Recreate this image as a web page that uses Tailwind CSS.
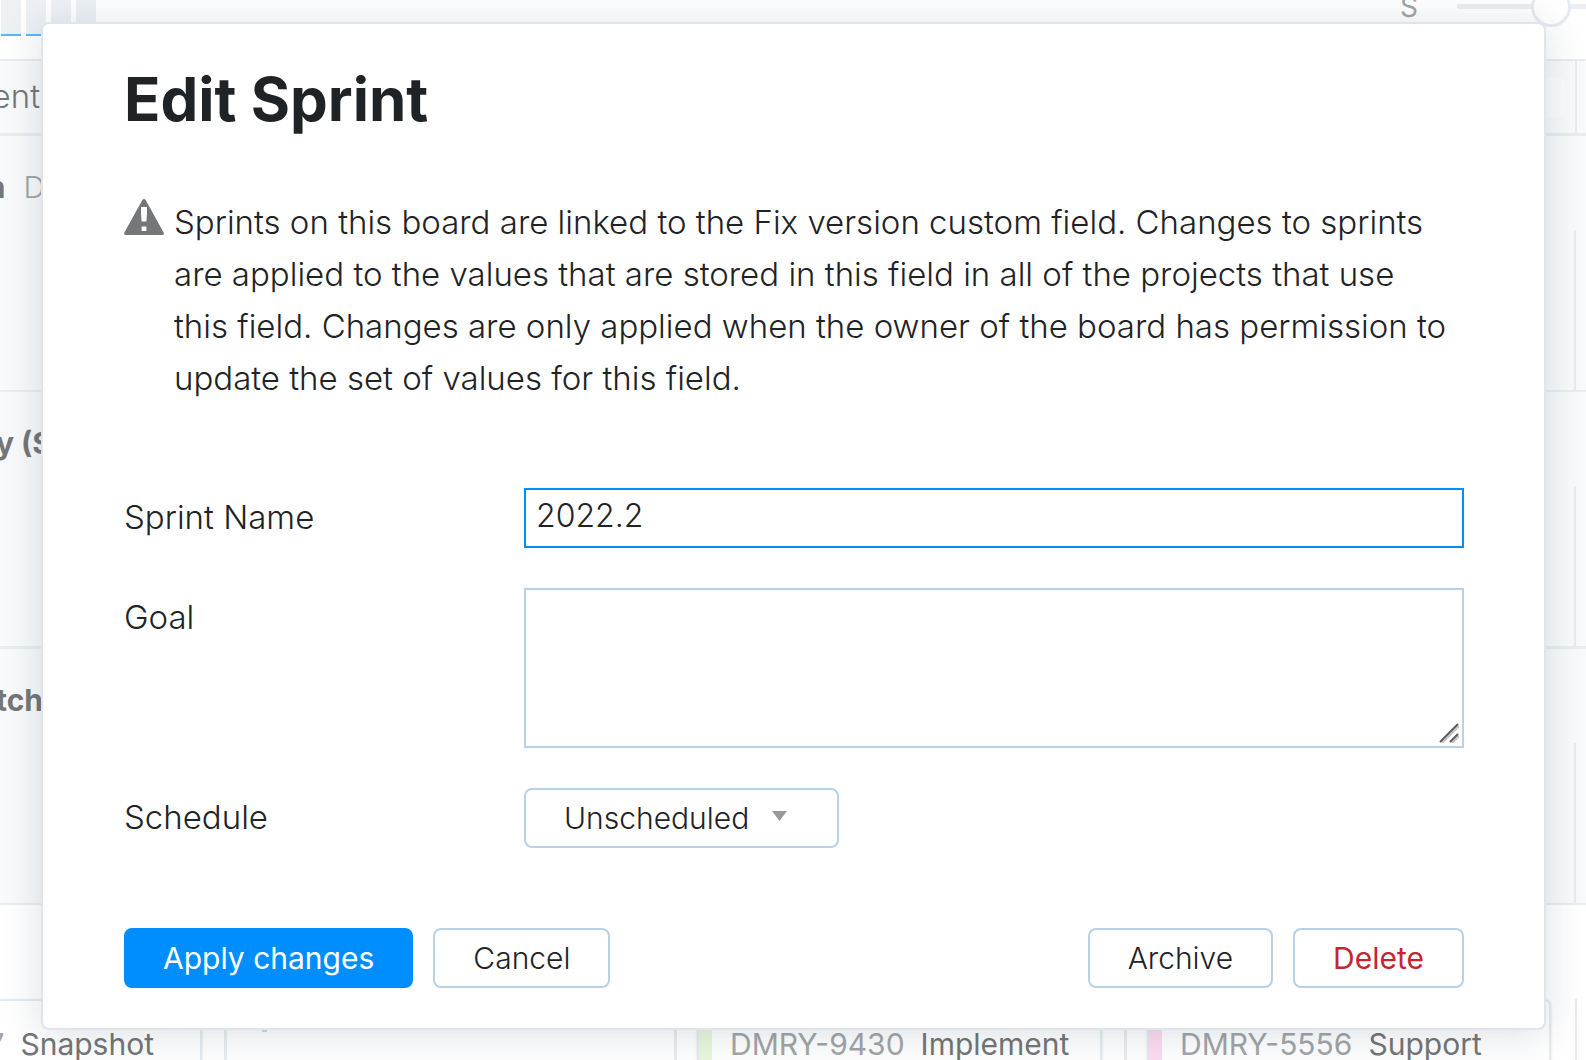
<!DOCTYPE html>
<html lang="en">
<head>
    <meta charset="UTF-8">
    <meta name="viewport" content="width=device-width, initial-scale=1.0">
    <title>Edit Sprint</title>
    <script src="https://cdn.jsdelivr.net/npm/@tailwindcss/browser@4"></script>
</head>
<body class="relative h-screen overflow-hidden bg-white font-['Inter',sans-serif] font-light text-[#1f2326]">

    <!-- Board behind the dialog -->
    <div class="flex h-full flex-col overflow-hidden text-[#757677]" aria-hidden="true">
        <div class="flex h-[61px] shrink-0 items-start justify-between border-b-2 border-[#e9edf1]">
            <div class="flex gap-[5px] pl-px">
                <div class="h-9 w-5 border-b-2 border-[#5eb5ff] bg-[#edf1f4]"></div>
                <div class="h-9 w-5 border-b-2 border-[#5eb5ff] bg-[#edf1f4]"></div>
                <div class="h-9 w-5 bg-[#edf1f4]"></div>
                <div class="h-9 w-5 bg-[#edf1f4]"></div>
            </div>
            <div class="-mr-[59px] flex h-[13px] items-center gap-[39px]">
                <label for="size" class="text-[28px] font-normal text-[#a3a5a7]">S</label>
                <input id="size" type="range" value="50" tabindex="-1" class="h-[5px] w-[188px] appearance-none bg-[#eaeef2] [&::-webkit-slider-thumb]:size-10 [&::-webkit-slider-thumb]:appearance-none [&::-webkit-slider-thumb]:rounded-full [&::-webkit-slider-thumb]:border-3 [&::-webkit-slider-thumb]:border-[#e7ebf0] [&::-webkit-slider-thumb]:bg-white">
            </div>
        </div>

        <div class="flex h-[75px] shrink-0 justify-between border-b-3 border-[#e9edf1] bg-[#f8fafb]">
            <div class="flex w-10 items-center justify-end text-[33px]">ent</div>
            <div class="mr-[9px] flex w-[60px] items-center border-r-2 border-[#e9ebf1]">
                <div class="h-10 w-12 rounded-lg bg-[#fcfcfd]"></div>
            </div>
        </div>

        <div class="flex h-64 shrink-0 items-end justify-between border-b-2 border-[#e9edf1] bg-[#f8fafb]">
            <div class="flex w-[45px] justify-end gap-[18px] self-start pt-[29px] text-[30px]"><b class="font-bold">n</b><span class="text-[#a3a5a7]">D</span></div>
            <div class="mr-2.5 h-40 border-r-2 border-[#e9ebf1]"></div>
        </div>
        <div class="flex h-[257px] shrink-0 items-end justify-between border-b-3 border-[#e9edf1] bg-[#f8fafb]">
            <div class="flex w-[52px] justify-end self-start whitespace-nowrap pt-[29px] text-[30px] font-bold">y (S</div>
            <div class="mr-2.5 h-40 border-r-2 border-[#e9ebf1]"></div>
        </div>
        <div class="flex h-64 shrink-0 items-end justify-between border-b-2 border-[#e9edf1] bg-[#f8fafb]">
            <div class="flex w-[43px] justify-end self-start pt-[29px] text-[30px] font-bold">tch</div>
            <div class="mr-2.5 h-40 border-r-2 border-[#e9ebf1]"></div>
        </div>

        <div class="mt-[94px] grid flex-1 grid-cols-[227px_1fr_1fr_1fr_9px] text-[30px] font-normal">
            <div class="border-r-3 border-[#e7edf1] pr-[22px]">
                <div class="flex h-full justify-end gap-4 rounded-tr-md border-t-2 border-r-2 border-[#e4ecf2] pt-[21px] pr-[46px] shadow-sm"><span class="text-[#a3a5a7]">7</span><span>Snapshot</span></div>
            </div>
            <div class="border-r-3 border-[#e7edf1] pt-[31px] pl-[35px]">
                <div class="h-0.5 w-[5px] bg-[#c9dbe8]"></div>
            </div>
            <div class="border-r-3 border-[#e7edf1] pr-[22px] pl-5">
                <div class="flex h-full gap-4 rounded-t-md border-x-2 border-t-2 border-[#e4ecf2] shadow-sm"><i class="w-[13px] bg-[#e9f7dd]"></i><span class="pt-[21px] pl-0.5 text-[#a3a5a7]">DMRY-9430</span><span class="pt-[21px]">Implement</span></div>
            </div>
            <div class="border-r-2 border-[#e9ebf1] pr-6 pl-5">
                <div class="flex h-full gap-4 rounded-t-md border-x-2 border-t-2 border-[#e4ecf2] shadow-sm"><i class="w-[13px] bg-[#fddcf1]"></i><span class="pt-[21px] pl-0.5 text-[#a3a5a7]">DMRY-5556</span><span class="pt-[21px]">Support</span></div>
            </div>
        </div>
    </div>

    <!-- Dialog -->
    <div class="absolute inset-0 pt-[22px] pr-10 pl-[41px]">
        <form role="dialog" aria-labelledby="title" class="rounded-lg border-2 border-[#dfe5eb] bg-white py-10 pr-20 pl-[81px] shadow-[0_4px_40px_rgba(0,42,60,0.15)]">
            <h1 id="title" class="text-[60px] leading-[70px] font-bold">Edit Sprint</h1>

            <div class="mt-[62px] flex gap-2.5 pr-3">
                <svg class="mt-[3px] h-9 w-10 shrink-0" viewBox="0 0 40 36" fill="#757677">
                    <path fill-rule="evenodd" d="M18.2 1.2Q20-1 21.8 1.2L39.6 33.4Q40.6 36 38 36H2Q-.6 36 .4 33.4ZM17 8V14L17.6 22.6H22.4L23 14V8ZM17.6 27.5V32H22.4V27.5Z"/>
                </svg>
                <p class="text-[33px] leading-[52px]">Sprints on this board are linked to the Fix version custom field. Changes to sprints are applied to the values that are stored in this field in all of the projects that use this field. Changes are only applied when the owner of the board has permission to update the set of values for this field.</p>
            </div>

            <div class="mt-[84px] grid grid-cols-[400px_1fr] items-start gap-y-10 text-[33px]">
                <label for="name" class="leading-[58px]">Sprint Name</label>
                <input id="name" type="text" value="2022.2" class="h-[60px] w-full border-2 border-[#008eff] px-2.5 pb-1.5 text-[32px] outline-none">

                <label for="goal" class="leading-[58px]">Goal</label>
                <div class="relative flex">
                    <textarea id="goal" class="h-40 w-full resize-none border-2 border-[#b8d1e5] p-2.5 outline-none"></textarea>
                    <svg class="absolute right-[5px] bottom-[5px] size-5" viewBox="0 0 20 20" fill="none" stroke-width="2">
                        <path stroke="#c4c4c4" d="M3 20 20 3M13 20 20 13"/>
                        <path stroke="#5c5c5c" d="M1 19 19 1M11 19 19 11"/>
                    </svg>
                </div>

                <label for="schedule" class="leading-[58px]">Schedule</label>
                <div class="relative w-[315px]">
                    <select id="schedule" class="block h-[60px] w-full appearance-none rounded-lg border-2 border-[#b8d1e5] bg-white px-[38px] text-[30px]">
                        <option>Unscheduled</option>
                    </select>
                    <svg class="pointer-events-none absolute top-[23px] right-[52px] h-2.5 w-[15px]" viewBox="0 0 15 10" fill="#999"><path d="M0 0H15L7.5 10Z"/></svg>
                </div>
            </div>

            <div class="mt-20 flex gap-5 text-[30px]">
                <button type="submit" class="h-[60px] rounded-lg bg-[#008eff] px-[39px] font-normal text-white">Apply changes</button>
                <button type="button" class="h-[60px] rounded-lg border-2 border-[#b8d1e5] px-[38px]">Cancel</button>
                <button type="button" class="ml-auto h-[60px] rounded-lg border-2 border-[#b8d1e5] px-[38px]">Archive</button>
                <button type="button" class="h-[60px] rounded-lg border-2 border-[#b8d1e5] px-[38px] font-normal text-[#c22731]">Delete</button>
            </div>
        </form>
    </div>
</body>
</html>
